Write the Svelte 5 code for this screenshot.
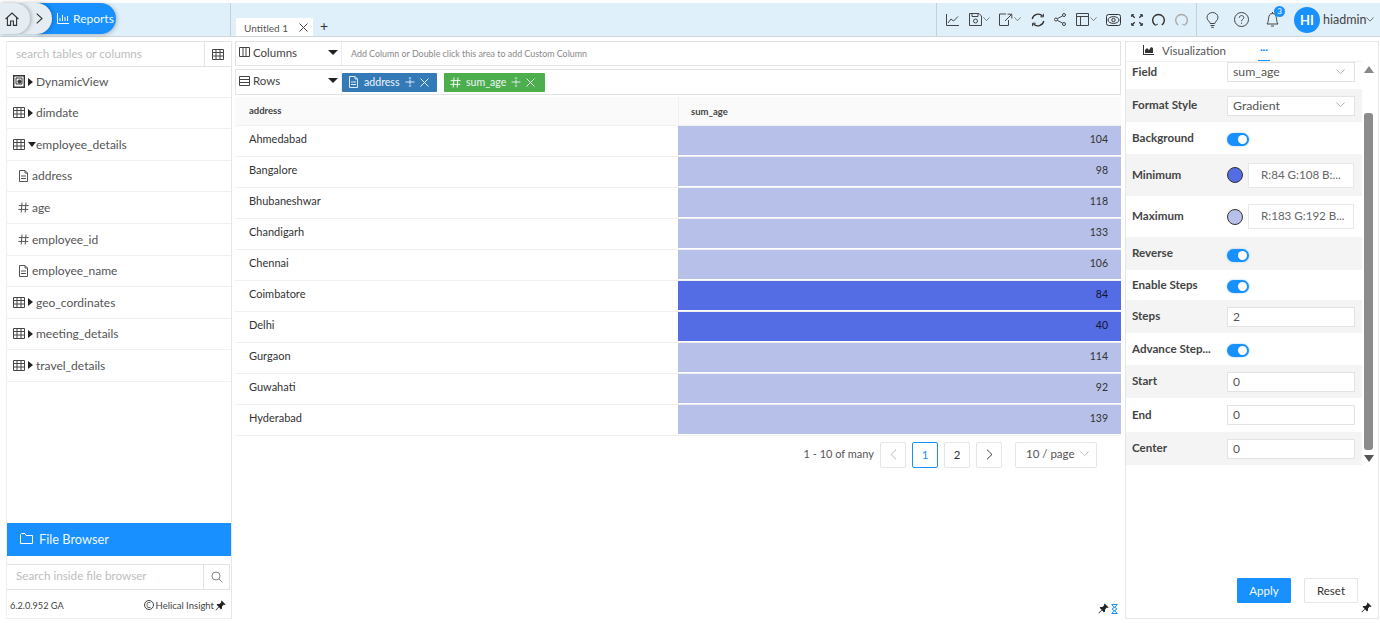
<script>
  const tree = [
    { name: 'DynamicView', icon: 'view', arrow: 'right', h: 31 },
    { name: 'dimdate', icon: 'table', arrow: 'right', h: 31 },
    { name: 'employee_details', icon: 'table', arrow: 'down', h: 32 },
    { name: 'address', icon: 'doc', h: 31, child: true },
    { name: 'age', icon: 'hash', h: 32, child: true },
    { name: 'employee_id', icon: 'hash', h: 32, child: true },
    { name: 'employee_name', icon: 'doc', h: 31, child: true },
    { name: 'geo_cordinates', icon: 'table', arrow: 'right', h: 32 },
    { name: 'meeting_details', icon: 'table', arrow: 'right', h: 31 },
    { name: 'travel_details', icon: 'table', arrow: 'right', h: 32 }
  ]

  const rows = [
    ['Ahmedabad', 104, false],
    ['Bangalore', 98, false],
    ['Bhubaneshwar', 118, false],
    ['Chandigarh', 133, false],
    ['Chennai', 106, false],
    ['Coimbatore', 84, true],
    ['Delhi', 40, true],
    ['Gurgaon', 114, false],
    ['Guwahati', 92, false],
    ['Hyderabad', 139, false]
  ]
</script>

{#snippet tableIcon()}
  <svg class="ic" width="12" height="11" viewBox="0 0 12 11" fill="none" stroke="#444" stroke-width="1">
    <path d="M.5 .5h11v10H.5zM.5 3.5h11M.5 7h11M4 .5v10M8 .5v10" />
  </svg>
{/snippet}

{#snippet docIcon(color = '#555')}
  <svg class="ic" width="11" height="12" viewBox="0 0 11 12" fill="none" stroke={color} stroke-width="1">
    <path d="M1.5 .5h5.5l2.5 2.5v8.5h-8zM3 6h5M3 8.5h5M7 .5v2.5h2.5" />
  </svg>
{/snippet}

{#snippet hashIcon(color = '#555')}
  <svg class="ic" width="11" height="11" viewBox="0 0 11 11" fill="none" stroke={color} stroke-width="1">
    <path d="M4 .5 3.2 10.5M8 .5l-.8 10M.7 3.6h10M.4 7.4h10" />
  </svg>
{/snippet}

{#snippet viewIcon()}
  <svg class="ic" width="12" height="13" viewBox="0 0 12 13" fill="none" stroke="#333" stroke-width="1">
    <path d="M.7 .7h10.6v11.6H.7z" stroke-width="1.4" />
    <path d="M3 3h6v6H3z" />
    <circle cx="6.5" cy="6.5" r="1.6" fill="#333" />
  </svg>
{/snippet}

{#snippet chevron(w = 9, color = '#999')}
  <svg width={w} height={w * 0.6} viewBox="0 0 10 6" fill="none" stroke={color} stroke-width="1">
    <path d="M.5 .5 5 5.2 9.5 .5" />
  </svg>
{/snippet}

{#snippet pin()}
  <svg width="11" height="11" viewBox="0 0 11 11" fill="#222">
    <path d="M6.6 .4 10.6 4.4 9.6 5 8.8 4.6 7 6.4 7 8.6 6 9.4 4 7.2 1 10.4.5 9.9 3.6 6.8 1.6 4.8 2.4 3.9 4.6 3.9 6.4 2.1 6 1.3z" />
  </svg>
{/snippet}

{#snippet pmIcon()}
  <svg width="10" height="10" viewBox="0 0 10 10" fill="none" stroke="#dfeaf5" stroke-width="1">
    <path d="M5 2.5v5M.5 5h9M3.8 1h2.4M3.8 9h2.4" />
  </svg>
{/snippet}

{#snippet xIcon()}
  <svg width="9" height="9" viewBox="0 0 9 9" fill="none" stroke="#eef4fa" stroke-width="1">
    <path d="M.5 .5l8 8M8.5 .5l-8 8" />
  </svg>
{/snippet}

{#snippet toggle()}
  <span class="toggle"><span class="knob"></span></span>
{/snippet}

<div class="page">
  <header class="topbar">
    <div class="crumbs">
      <div class="crumb-report">
        <svg width="12" height="11" viewBox="0 0 12 11" fill="none" stroke="#fff" stroke-width="1">
          <path d="M.5 0v10.5H12M3 8V5M5.5 8V2M8 8V4M10.5 8V3" />
        </svg>
        <span>Reports</span>
      </div>
      <div class="crumb-next">
        <svg width="7" height="11" viewBox="0 0 7 11" fill="none" stroke="#333" stroke-width="1.1">
          <path d="M.7 .7 6 5.5.7 10.3" />
        </svg>
      </div>
      <div class="crumb-home">
        <svg width="14" height="14" viewBox="0 0 14 14" fill="none" stroke="#333" stroke-width="1.1">
          <path d="M.6 7 7 1l6.4 6M2.4 5.8v7.6h3.2V9h2.8v4.4h3.2V5.8" />
        </svg>
      </div>
    </div>

    <div class="tabs">
      <div class="tab">
        <span>Untitled 1</span>
        <svg width="9" height="9" viewBox="0 0 9 9" fill="none" stroke="#444" stroke-width="1">
          <path d="M.5 .5l8 8M8.5 .5l-8 8" />
        </svg>
      </div>
      <span class="plus">+</span>
    </div>

    <div class="tools">
      <svg width="13" height="12" viewBox="0 0 13 12" fill="none" stroke="#444"><path d="M.5 0v11.5H13M2 9l3-4 2.5 2L12 2.5" /></svg>
      <div class="drop">
        <svg width="13" height="13" viewBox="0 0 13 13" fill="none" stroke="#444"><path d="M.5 .5h9.5l2.5 2.5v9.5H.5zM3 .5v3h6v-3" /><circle cx="6.5" cy="8" r="2" /></svg>
        {@render chevron(7, '#555')}
      </div>
      <div class="drop">
        <svg width="14" height="13" viewBox="0 0 14 13" fill="none" stroke="#444"><path d="M7 1H.5v11.5h9V7M6 8l6.5-6.5M8.5 1.2h4.3v4.3" /></svg>
        {@render chevron(7, '#555')}
      </div>
      <svg width="14" height="14" viewBox="0 0 14 14" fill="none" stroke="#333" stroke-width="1.3"><path d="M1.2 6A6 6 0 0 1 11.6 3.3M12.8 8A6 6 0 0 1 2.4 10.7" /><path d="M12.4 .8v3h-3M1.6 13.2v-3h3" stroke-width="1" /></svg>
      <svg width="12" height="13" viewBox="0 0 12 13" fill="none" stroke="#444"><circle cx="10" cy="2" r="1.5" /><circle cx="2" cy="6.5" r="1.5" /><circle cx="10" cy="11" r="1.5" /><path d="M3.3 5.7 8.7 2.8M3.3 7.3l5.4 2.9" /></svg>
      <div class="drop">
        <svg width="13" height="13" viewBox="0 0 13 13" fill="none" stroke="#444"><path d="M.5 .5h12v12H.5zM.5 3.5h12M4.5 3.5v9" /></svg>
        {@render chevron(7, '#555')}
      </div>
      <svg width="15" height="12" viewBox="0 0 15 12" fill="none" stroke="#333"><rect x=".5" y=".5" width="14" height="11" rx="2" /><ellipse cx="7.5" cy="6" rx="5.5" ry="3.4" /><circle cx="7.5" cy="6" r="1.7" /></svg>
      <svg width="12" height="12" viewBox="0 0 12 12" fill="none" stroke="#333" stroke-width="1.3"><path d="M.7 .7l3 3M11.3 .7l-3 3M.7 11.3l3-3M11.3 11.3l-3-3" /><path d="M.7 3V.7H3M9 .7h2.3V3M.7 9v2.3H3M9 11.3h2.3V9" stroke-width="1" /></svg>
      <svg width="13" height="13" viewBox="0 0 13 13" fill="none" stroke="#333" stroke-width="1.4"><path d="M3.2 12A5.8 5.8 0 1 1 9.8 12" /><path d="M.8 9.5l2.6 2.8 2.4-1.2" stroke-width="1" /></svg>
      <svg width="13" height="13" viewBox="0 0 13 13" fill="none" stroke="#aaa" stroke-width="1.4"><path d="M3.2 12A5.8 5.8 0 1 1 9.8 12" /><path d="M12.2 9.5l-2.6 2.8-2.4-1.2" stroke-width="1" /></svg>
    </div>

    <div class="user">
      <svg width="13" height="16" viewBox="0 0 13 16" fill="none" stroke="#444"><path d="M4.2 11.5C4 9.5 1 8.5 1 5.5a5.5 5 0 0 1 11 0c0 3-3 4-3.2 6zM4.5 13.5h4M5.2 15.3h2.6" /></svg>
      <svg class="help" width="15" height="15" viewBox="0 0 15 15" fill="none" stroke="#444"><circle cx="7.5" cy="7.5" r="7" /><path d="M5.3 5.8c0-3 4.5-2.8 4.5-.2 0 1.8-2.3 1.6-2.3 3.6M7.5 10.6v1.2" /></svg>
      <div class="bell">
        <svg width="13" height="15" viewBox="0 0 13 15" fill="none" stroke="#444"><path d="M6.5 1.5c-5.5 0-3 8-5.5 10.5h11C9.5 9.5 12 1.5 6.5 1.5zM5 14h3M6.5 0v1.5" /></svg>
        <span class="badge">3</span>
      </div>
      <span class="avatar">HI</span>
      <span class="uname">hiadmin</span>
      {@render chevron(8, '#555')}
    </div>
  </header>

  <div class="body">
    <aside class="left">
      <div class="search-row">
        <input class="search" placeholder="search tables or columns" />
        <span class="grid-btn">{@render tableIcon()}</span>
      </div>
      <div class="tree">
        {#each tree as t}
          <div class="node" class:child={t.child} style="height: {t.h}px">
            {#if t.icon === 'table'}
              {@render tableIcon()}
            {:else if t.icon === 'view'}
              {@render viewIcon()}
            {:else if t.icon === 'doc'}
              {@render docIcon()}
            {:else}
              {@render hashIcon()}
            {/if}
            {#if t.arrow}
              <span class="arrow {t.arrow}"></span>
            {/if}
            <span>{t.name}</span>
          </div>
        {/each}
      </div>
      <div class="file-btn">
        <svg width="13" height="11" viewBox="0 0 13 11" fill="none" stroke="#fff"><path d="M.5 1.5v9h12V2.5H6L5 .5H1.5z" /></svg>
        <span>File Browser</span>
      </div>
      <div class="file-search">
        <input class="search" placeholder="Search inside file browser" />
        <span class="mag">
          <svg width="12" height="12" viewBox="0 0 12 12" fill="none" stroke="#888"><circle cx="5" cy="5" r="4" /><path d="M8 8l3.5 3.5" /></svg>
        </span>
      </div>
      <div class="version">
        <span>6.2.0.952 GA</span>
        <span class="brand">
          <span class="copy">C</span>
          <span>Helical Insight</span>
          {@render pin()}
        </span>
      </div>
    </aside>

    <main class="main">
      <div class="shelf columns">
        <div class="shelf-label">
          <svg class="ic" width="11" height="10" viewBox="0 0 11 10" fill="none" stroke="#444"><path d="M.5 .5h10v9H.5zM4 .5v9M7 .5v9" /></svg>
          <span>Columns</span>
          <span class="caret"></span>
        </div>
        <div class="shelf-hint">Add Column or Double click this area to add Custom Column</div>
      </div>
      <div class="shelf rows-shelf">
        <div class="shelf-label">
          <svg class="ic" width="11" height="10" viewBox="0 0 11 10" fill="none" stroke="#444"><path d="M.5 .5h10v9H.5zM.5 3.5h10M.5 6.5h10" /></svg>
          <span>Rows</span>
          <span class="caret"></span>
        </div>
        <div class="chips">
          <div class="chip blue">
            {@render docIcon('#dfeaf5')}
            <span>address</span>
            {@render pmIcon()}
            {@render xIcon()}
          </div>
          <div class="chip green">
            {@render hashIcon('#eef8ee')}
            <span>sum_age</span>
            {@render pmIcon()}
            {@render xIcon()}
          </div>
        </div>
      </div>

      <div class="table">
        <div class="thead">
          <div class="cell-name">address</div>
          <div class="cell-head">sum_age</div>
        </div>
        {#each rows as r}
          <div class="tr">
            <div class="cell-name">{r[0]}</div>
            <div class="cell-val" class:dark={r[2]}>{r[1]}</div>
          </div>
        {/each}
      </div>

      <div class="pager">
        <span class="count">1 - 10 of many</span>
        <span class="pg muted">
          <svg width="7" height="11" viewBox="0 0 7 11" fill="none" stroke="#bbb"><path d="M6 .7 1 5.5l5 4.8" /></svg>
        </span>
        <span class="pg active">1</span>
        <span class="pg">2</span>
        <span class="pg">
          <svg width="7" height="11" viewBox="0 0 7 11" fill="none" stroke="#444"><path d="M1 .7l5 4.8-5 4.8" /></svg>
        </span>
        <span class="pg-size">10 / page {@render chevron(9, '#bbb')}</span>
      </div>

      <div class="main-foot">
        {@render pin()}
        <svg width="7" height="10" viewBox="0 0 7 10" fill="none" stroke="#1890ff"><path d="M.5 .5h6M.5 9.5h6M1.2 .5c0 3 4.6 3 4.6 4.5S1.2 6.500 1.2 9.5M5.800 .5c0 3-4.600 3-4.600 4.500s4.600 1.500 4.600 4.500" /></svg>
      </div>
    </main>

    <aside class="rpanel">
      <div class="rtabs">
        <div class="rtab">
          <svg width="11" height="10" viewBox="0 0 11 10" fill="#333"><path d="M0 0h1v9h10v1H0zM2 8V5l2-2 2 2 2-3 2 1v5z" /></svg>
          <span>Visualization</span>
        </div>
        <div class="rtab-more">···</div>
      </div>
      <div class="props-wrap">
        <div class="props">
          <div class="prop first" style="height: 27px">
            <label>Field</label>
            <div class="select">sum_age {@render chevron(9, '#aaa')}</div>
          </div>
          <div class="prop alt" style="height: 33px">
            <label>Format Style</label>
            <div class="select">Gradient {@render chevron(9, '#aaa')}</div>
          </div>
          <div class="prop" style="height: 32px">
            <label>Background</label>
            {@render toggle()}
          </div>
          <div class="prop alt" style="height: 42px">
            <label>Minimum</label>
            <span class="swatch min"></span>
            <div class="color-val">R:84 G:108 B:...</div>
          </div>
          <div class="prop" style="height: 41px">
            <label>Maximum</label>
            <span class="swatch max"></span>
            <div class="color-val">R:183 G:192 B...</div>
          </div>
          <div class="prop alt" style="height: 33px">
            <label>Reverse</label>
            {@render toggle()}
          </div>
          <div class="prop" style="height: 30px">
            <label>Enable Steps</label>
            {@render toggle()}
          </div>
          <div class="prop alt" style="height: 33px">
            <label>Steps</label>
            <div class="num">2</div>
          </div>
          <div class="prop" style="height: 32px">
            <label>Advance Step...</label>
            {@render toggle()}
          </div>
          <div class="prop alt" style="height: 33px">
            <label>Start</label>
            <div class="num">0</div>
          </div>
          <div class="prop" style="height: 34px">
            <label>End</label>
            <div class="num">0</div>
          </div>
          <div class="prop alt" style="height: 33px">
            <label>Center</label>
            <div class="num">0</div>
          </div>
        </div>
        <div class="scrollbar">
          <span class="up"></span>
          <span class="thumb"></span>
          <span class="down"></span>
        </div>
      </div>
      <div class="actions">
        <button class="apply">Apply</button>
        <button class="reset">Reset</button>
      </div>
      <div class="right-pin">{@render pin()}</div>
    </aside>
  </div>
</div>

<style>
  :global(body) {
    margin: 0;
    background: #fff;
    font-family: "Lato", "Liberation Sans", sans-serif;
    color: #444;
  }

  .page {
    height: 623px;
    padding-top: 3px;
    box-sizing: border-box;
    display: flex;
    flex-direction: column;
    overflow: hidden;
  }

  .ic {
    flex: none;
  }

  /* top bar */
  .topbar {
    height: 34px;
    flex: none;
    box-sizing: border-box;
    background: #e0f0fa;
    border-bottom: 1px solid #cfd6db;
    display: flex;
    align-items: center;
  }

  .crumbs {
    width: 231px;
    height: 33px;
    flex: none;
    box-sizing: border-box;
    border-right: 1px solid #c9d0d5;
    display: flex;
    flex-direction: row-reverse;
    justify-content: flex-end;
    margin-right: 5px;
  }

  .crumb-home,
  .crumb-next,
  .crumb-report {
    height: 31px;
    display: flex;
    align-items: center;
    border-radius: 0 16px 16px 0;
  }

  .crumb-home {
    width: 25px;
    padding-left: 5px;
    background: #e6edf2;
    box-shadow: 1px 0 4px rgba(0, 0, 0, 0.3);
    position: relative;
    z-index: 3;
  }

  .crumb-next {
    width: 30px;
    margin-left: -8px;
    padding-left: 14px;
    box-sizing: border-box;
    background: #e6edf2;
    box-shadow: 1px 0 4px rgba(0, 0, 0, 0.25);
    position: relative;
    z-index: 2;
  }

  .crumb-report {
    width: 79px;
    margin-left: -15px;
    padding-left: 20px;
    box-sizing: border-box;
    gap: 4px;
    background: #1890ff;
    color: #f3f9ff;
    font-size: 12px;
    box-shadow: 1px 1px 4px rgba(0, 0, 0, 0.25);
  }

  .tabs {
    display: flex;
    align-items: flex-end;
    height: 33px;
    width: 700px;
    flex: none;
  }

  .tab {
    width: 77px;
    height: 18px;
    box-sizing: border-box;
    padding: 1px 5px 0 8px;
    background: #fff;
    display: flex;
    align-items: center;
    justify-content: space-between;
    font-size: 10px;
    color: #555;
  }

  .plus {
    margin-left: 7px;
    margin-bottom: 2px;
    font-size: 14px;
    line-height: 16px;
    color: #333;
  }

  .tools {
    width: 261px;
    height: 33px;
    flex: none;
    box-sizing: border-box;
    border-left: 1px solid #c9d0d5;
    border-right: 1px solid #c9d0d5;
    padding-left: 9px;
    display: flex;
    align-items: center;
    gap: 9.5px;
  }

  .drop {
    display: flex;
    align-items: center;
    gap: 1px;
  }

  .user {
    flex: 1;
    display: flex;
    align-items: center;
    padding-left: 9px;
    height: 33px;
    font-size: 12px;
  }

  .help {
    margin-left: 15px;
  }

  .bell {
    position: relative;
    margin-left: 17px;
    display: flex;
  }

  .badge {
    position: absolute;
    top: -6px;
    left: 8px;
    width: 11px;
    height: 11px;
    border-radius: 50%;
    background: #1890ff;
    color: #fff;
    font-size: 8px;
    line-height: 11px;
    text-align: center;
  }

  .avatar {
    margin-left: 15px;
    width: 26px;
    height: 26px;
    border-radius: 50%;
    background: #1890ff;
    color: #fff;
    font-size: 13px;
    font-weight: 700;
    line-height: 26px;
    text-align: center;
  }

  .uname {
    margin-left: 3px;
    font-size: 12.5px;
    color: #444;
  }

  /* body */
  .body {
    flex: 1;
    min-height: 0;
    display: flex;
    padding: 4px 2px 4px 6px;
    box-sizing: border-box;
  }

  .left {
    width: 226px;
    flex: none;
    box-sizing: border-box;
    border-right: 1px solid #e6e6e6;
    border-left: 1px solid #eee;
    border-bottom: 1px solid #eee;
    display: flex;
    flex-direction: column;
  }

  .search-row {
    height: 26px;
    flex: none;
    display: flex;
    border-top: 1px solid #e3e3e3;
    box-sizing: border-box;
  }

  .search {
    flex: 1;
    min-width: 0;
    box-sizing: border-box;
    border: 1px solid #e3e3e3;
    border-top: 0;
    border-left: 0;
    outline: none;
    padding: 0 9px 3px;
    font: 11.7px "Lato", "Liberation Sans", sans-serif;
    background: #fff;
  }

  .search::placeholder {
    color: #bdbdbd;
    opacity: 1;
  }

  .grid-btn {
    width: 26px;
    display: flex;
    align-items: center;
    justify-content: center;
    border-bottom: 1px solid #e3e3e3;
  }

  .tree {
    flex: 1;
  }

  .node {
    box-sizing: border-box;
    border-bottom: 1px solid #f0f0f0;
    display: flex;
    align-items: center;
    padding-left: 6px;
    padding-bottom: 1px;
    gap: 3px;
    font-size: 12px;
    color: #555;
  }

  .node.child {
    padding-left: 11px;
    gap: 3px;
  }

  .arrow {
    display: inline-block;
    flex: none;
    width: 0;
    height: 0;
  }

  .arrow.right {
    border-left: 5px solid #222;
    border-top: 4px solid transparent;
    border-bottom: 4px solid transparent;
  }

  .arrow.down {
    border-top: 5px solid #222;
    border-left: 4px solid transparent;
    border-right: 4px solid transparent;
    margin-right: -3px;
  }

  .file-btn {
    height: 33px;
    flex: none;
    box-sizing: border-box;
    background: #1890ff;
    color: #eef7ff;
    display: flex;
    align-items: center;
    gap: 6px;
    padding: 0 0 2px 13px;
    font-size: 12.8px;
  }

  .file-search {
    height: 26px;
    flex: none;
    margin: 8px 1px 0 0;
    display: flex;
    border: 1px solid #e3e3e3;
    border-left: 0;
    box-sizing: border-box;
  }

  .file-search .search {
    border: 0;
    border-right: 1px solid #e3e3e3;
    padding-bottom: 4px;
  }

  .mag {
    width: 25px;
    display: flex;
    align-items: center;
    justify-content: center;
  }

  .version {
    flex: none;
    height: 28px;
    display: flex;
    align-items: center;
    justify-content: space-between;
    padding: 2px 5px 0 3px;
    box-sizing: border-box;
    font-size: 9.2px;
    color: #444;
  }

  .brand {
    display: flex;
    align-items: center;
    gap: 1px;
    font-size: 9.5px;
  }

  .copy {
    width: 8px;
    height: 8px;
    border: 1px solid #444;
    border-radius: 50%;
    font-size: 7px;
    line-height: 8px;
    text-align: center;
    margin-right: 1px;
  }

  /* center */
  .main {
    width: 893px;
    flex: none;
    position: relative;
    padding-left: 3px;
    box-sizing: border-box;
  }

  .shelf {
    width: 886px;
    box-sizing: border-box;
    border: 1px solid #e3e3e3;
    display: flex;
    font-size: 11.5px;
  }

  .columns {
    height: 25px;
  }

  .rows-shelf {
    height: 26px;
    margin-top: 3px;
  }

  .shelf-label {
    width: 106px;
    flex: none;
    box-sizing: border-box;
    border-right: 1px solid #eee;
    padding: 0 3px 3px;
    display: flex;
    align-items: center;
    gap: 3px;
    color: #444;
  }

  .caret {
    margin-left: auto;
    width: 0;
    height: 0;
    border-top: 5px solid #222;
    border-left: 5px solid transparent;
    border-right: 5px solid transparent;
  }

  .shelf-hint {
    padding-left: 9px;
    font-size: 8.9px;
    color: #888;
    align-self: center;
  }

  .chips {
    display: flex;
    gap: 7px;
    align-items: center;
  }

  .chip {
    height: 19px;
    box-sizing: border-box;
    border-radius: 1px;
    display: flex;
    align-items: center;
    color: #eef4fa;
    font-size: 10.6px;
    padding: 0 5px 0 6px;
    gap: 5px;
  }

  .chip.blue {
    width: 95px;
    background: #337ab7;
  }

  .chip.green {
    width: 101px;
    background: #4cae4c;
  }

  .table {
    width: 886px;
    margin-top: 2px;
    font-size: 11px;
    color: #333;
  }

  .thead {
    height: 29px;
    display: flex;
    align-items: center;
    background: #fafafa;
    border-bottom: 1px solid #f0f0f0;
    box-sizing: border-box;
    font-size: 9.5px;
    font-weight: 700;
    color: #444;
  }

  .cell-name {
    width: 443px;
    flex: none;
    box-sizing: border-box;
    padding: 0 0 5px 14px;
  }

  .thead .cell-name {
    padding-bottom: 2px;
  }

  .cell-head {
    flex: 1;
    align-self: stretch;
    display: flex;
    align-items: center;
    padding: 0 0 0 12px;
    border-left: 1px solid #f0f0f0;
  }

  .tr {
    height: 31px;
    box-sizing: border-box;
    display: flex;
    align-items: center;
    border-bottom: 1px solid #f0f0f0;
  }

  .cell-val {
    flex: 1;
    align-self: stretch;
    background: #b7c0e8;
    margin-bottom: 1px;
    display: flex;
    align-items: center;
    justify-content: flex-end;
    padding: 0 13px 3px 0;
    font-size: 10.5px;
  }

  .cell-val.dark {
    background: #546ce4;
    color: #14142a;
  }

  .pager {
    width: 862px;
    margin-top: 6px;
    display: flex;
    align-items: center;
    justify-content: flex-end;
    font-size: 11px;
    color: #555;
    gap: 6px;
  }

  .count {
    padding-bottom: 3px;
  }

  .pg {
    width: 26px;
    height: 26px;
    box-sizing: border-box;
    border: 1px solid #e5e5e5;
    border-radius: 2px;
    display: flex;
    align-items: center;
    justify-content: center;
    padding-bottom: 1px;
    font-size: 11.5px;
    color: #333;
  }

  .pg.active {
    border-color: #1890ff;
    color: #1890ff;
  }

  .pg-size {
    width: 82px;
    height: 26px;
    margin-left: 7px;
    box-sizing: border-box;
    border: 1px solid #e5e5e5;
    border-radius: 2px;
    display: flex;
    align-items: center;
    gap: 5px;
    padding: 0 0 3px 10px;
    font-size: 11.5px;
  }

  .main-foot {
    position: absolute;
    right: 7px;
    bottom: 5px;
    display: flex;
    align-items: center;
    gap: 2px;
  }

  /* right panel */
  .rpanel {
    flex: 1;
    box-sizing: border-box;
    border: 1px solid #e6e6e6;
    position: relative;
    display: flex;
    flex-direction: column;
  }

  .rtabs {
    height: 20px;
    flex: none;
    display: flex;
    align-items: center;
    padding-left: 17px;
    font-size: 11.5px;
    color: #555;
    border-bottom: 1px solid #f0f0f0;
    width: 236px;
    box-sizing: border-box;
  }

  .rtab {
    display: flex;
    align-items: center;
    gap: 8px;
    padding-bottom: 3px;
  }

  .rtab-more {
    margin-left: 32px;
    height: 19px;
    width: 12px;
    line-height: 14px;
    text-align: center;
    color: #1890ff;
    border-bottom: 1px solid #1890ff;
    box-sizing: border-box;
    font-size: 10px;
    font-weight: 700;
  }

  .props-wrap {
    display: flex;
  }

  .props {
    width: 236px;
    flex: none;
  }

  .prop {
    box-sizing: border-box;
    display: flex;
    align-items: center;
    padding-left: 6px;
  }

  .prop.first {
    padding-bottom: 7px;
  }

  .prop.alt {
    background: #f4f4f4;
  }

  label {
    width: 95px;
    flex: none;
    margin-bottom: 2px;
    font-size: 11.6px;
    font-weight: 700;
    color: #444;
    white-space: nowrap;
    overflow: hidden;
  }

  .select {
    width: 128px;
    height: 20px;
    box-sizing: border-box;
    border: 1px solid #e3e3e3;
    background: #fff;
    display: flex;
    align-items: center;
    justify-content: space-between;
    padding: 0 9px 1px 5px;
    font-size: 12.3px;
    color: #555;
  }

  .toggle {
    width: 22px;
    height: 13px;
    margin-top: 3px;
    border-radius: 7px;
    background: #1890ff;
    position: relative;
    box-shadow: 0 0 2px rgba(24, 144, 255, 0.5);
  }

  .knob {
    position: absolute;
    top: 2px;
    right: 2px;
    width: 9px;
    height: 9px;
    border-radius: 50%;
    background: #fff;
  }

  .swatch {
    width: 16px;
    height: 16px;
    border-radius: 50%;
    border: 1px solid #333;
    flex: none;
    box-sizing: border-box;
  }

  .swatch.min {
    background: #546ce4;
  }

  .swatch.max {
    background: #b7c0e8;
  }

  .color-val {
    width: 106px;
    height: 25px;
    margin-left: 5px;
    box-sizing: border-box;
    border: 1px solid #e8e8e8;
    background: #fff;
    padding-left: 12px;
    line-height: 22px;
    font-size: 11.6px;
    color: #666;
    white-space: nowrap;
    overflow: hidden;
  }

  .num {
    width: 128px;
    height: 20px;
    box-sizing: border-box;
    border: 1px solid #e3e3e3;
    background: #fff;
    padding-left: 5px;
    line-height: 17px;
    font-size: 12px;
    color: #555;
  }

  .scrollbar {
    width: 16px;
    flex: none;
    display: flex;
    flex-direction: column;
    align-items: center;
    padding: 4px 3px 0 0;
    box-sizing: border-box;
  }

  .up,
  .down {
    width: 0;
    height: 0;
    border-left: 5px solid transparent;
    border-right: 5px solid transparent;
  }

  .up {
    border-bottom: 7px solid #888;
  }

  .down {
    border-top: 7px solid #555;
  }

  .thumb {
    width: 9px;
    height: 337px;
    margin: 40px 0 5px;
    background: #8c8c8c;
    border-radius: 3px;
  }

  .actions {
    margin-top: auto;
    margin-bottom: 15px;
    padding-left: 111px;
    display: flex;
    gap: 13px;
  }

  button {
    width: 54px;
    height: 25px;
    padding: 0;
    font: 11.5px "Lato", "Liberation Sans", sans-serif;
    border-radius: 1px;
    cursor: pointer;
  }

  .apply {
    background: #1890ff;
    color: #f3f9ff;
    border: 1px solid #1890ff;
  }

  .reset {
    background: #fff;
    color: #333;
    border: 1px solid #e5e5e5;
  }

  .right-pin {
    position: absolute;
    right: 6px;
    bottom: 2px;
  }
</style>
